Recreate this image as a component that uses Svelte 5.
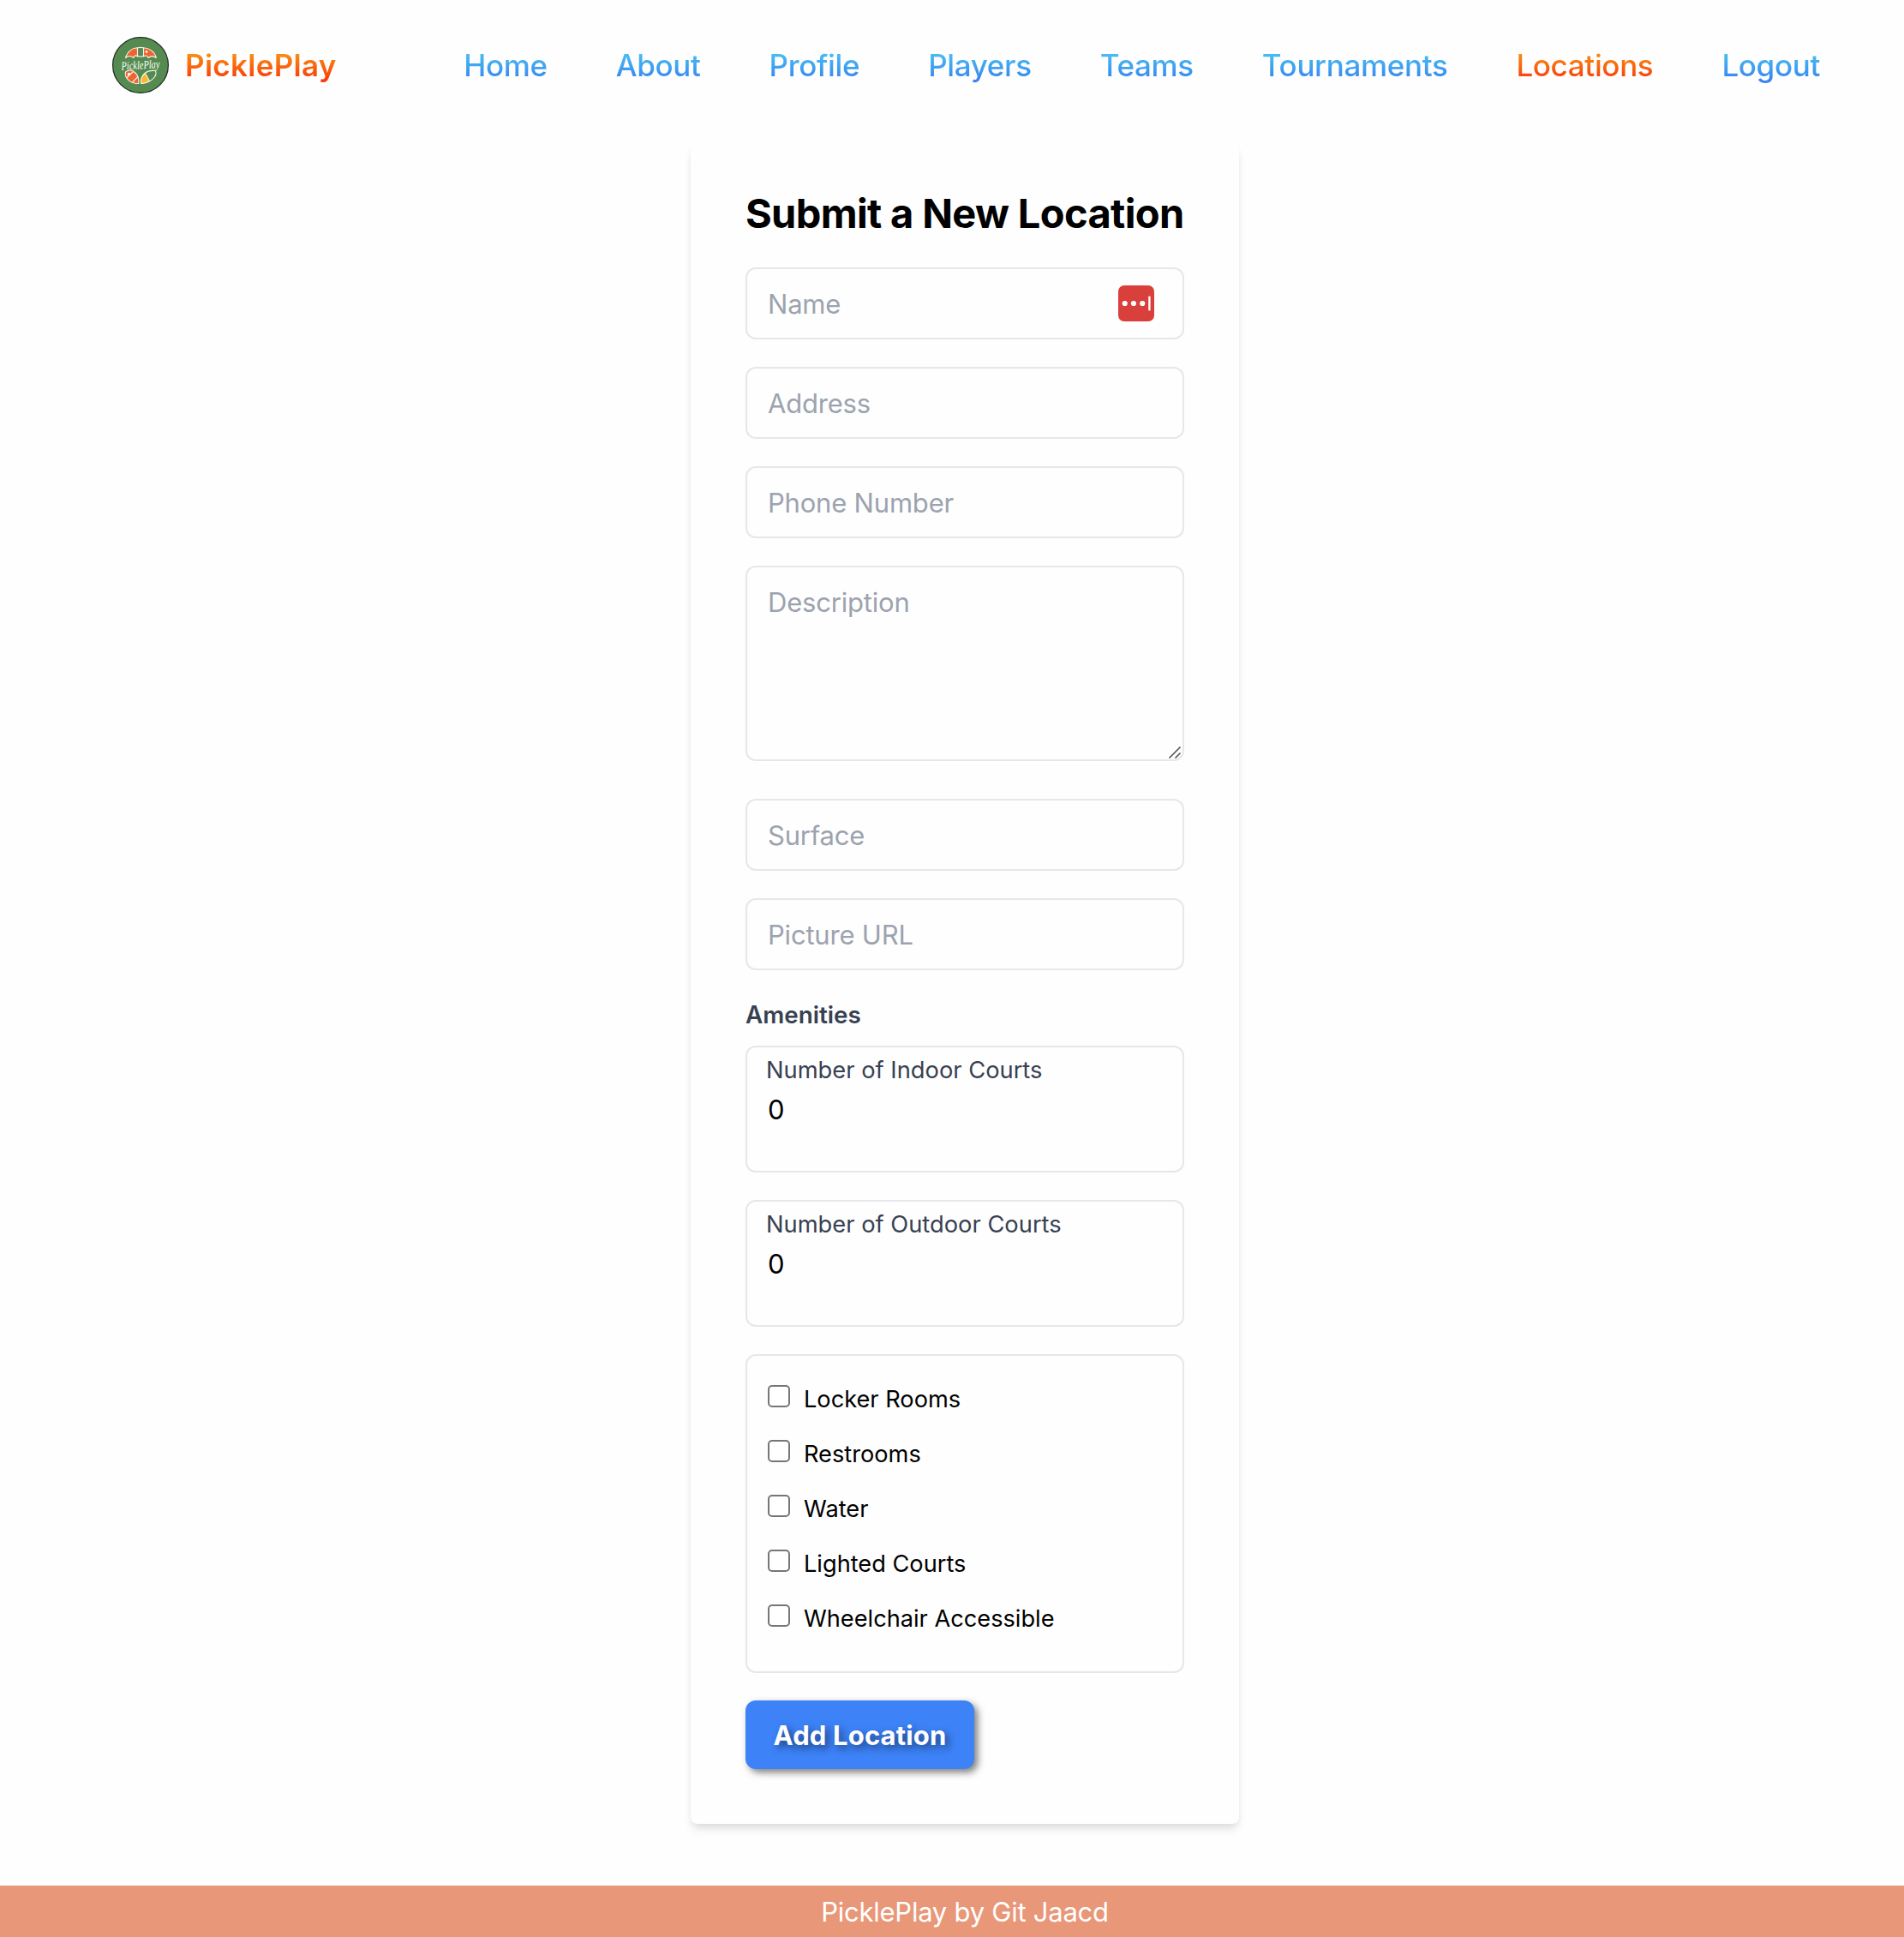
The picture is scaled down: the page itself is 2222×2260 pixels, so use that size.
<script>
  const links = [
    { label: 'Home' },
    { label: 'About' },
    { label: 'Profile' },
    { label: 'Players' },
    { label: 'Teams' },
    { label: 'Tournaments' },
    { label: 'Locations', active: true },
    { label: 'Logout' }
  ];
  const amenities = ['Locker Rooms', 'Restrooms', 'Water', 'Lighted Courts', 'Wheelchair Accessible'];
</script>

<div class="page">
  <header>
    <svg class="logo" viewBox="0 0 66 66" aria-hidden="true">
      <circle cx="33" cy="33" r="32.400" fill="#558b50" stroke="#1f2a20" stroke-width="1.200" />
      <g stroke="#f4f4ec" stroke-width="1.100" stroke-linejoin="round">
        <path d="M15.500 24.500C18 16.500 24 13 29.500 12.800V23C27.500 21 25.500 22 25 24.500C22 22 18.500 22 15.500 24.500Z" fill="#f1622f" />
        <path d="M36.500 12.800C43 13 49.500 17 51.300 24.500C48 22 45 22 42 24.500C41 22 39 21 36.500 23Z" fill="#f1622f" />
        <path d="M29.500 12.800Q33 12 36.500 12.800V22Q33 24.500 29.500 22Z" fill="#558b50" />
        <path d="M17 40C24 36.500 32 44 30.700 54.500C22 55 13.500 48 15.500 41Z" fill="#f1622f" />
        <path d="M16.500 48L24.500 40.500M23 53.500L30 46.500" fill="none" />
        <path d="M33.500 54.500C33 46 38 38.500 50 39.500C53 43 49 53 33.500 54.500Z" fill="#558b50" />
        <path d="M33.500 54.500C33 49 35 45 38.500 42.500L43.500 51.500Q39 54.500 33.500 54.500Z" fill="#fbb827" />
      </g>
      <circle cx="40" cy="17.500" r="1.400" fill="#fff" />
      <circle cx="19.500" cy="43.500" r="1.700" fill="#fff" />
      <text x="10.500" y="37.500" class="script" textLength="45" lengthAdjust="spacingAndGlyphs" transform="rotate(-3 33 34)">PicklePlay</text>
    </svg>
    <span class="brand">PicklePlay</span>
    <nav>
      {#each links as link}
        <a class:active={link.active}>{link.label}</a>
      {/each}
    </nav>
  </header>

  <main>
    <form>
      <h1>Submit a New Location</h1>
      <div class="field">
        <span>Name</span>
        <svg class="vault" viewBox="0 0 42 42" aria-hidden="true">
          <rect width="42" height="42" rx="7" fill="#d93f3b" />
          <g fill="#fff">
            <circle cx="7.700" cy="21" r="3.100" />
            <circle cx="17.900" cy="21" r="3.100" />
            <circle cx="28.200" cy="21" r="3.100" />
            <rect x="35.200" y="12.500" width="2.400" height="17" rx="1" />
          </g>
        </svg>
      </div>
      <div class="field"><span>Address</span></div>
      <div class="field"><span>Phone Number</span></div>
      <div class="field area">
        <span>Description</span>
        <svg class="grip" viewBox="0 0 14 14" aria-hidden="true">
          <path d="M.5 13.500L13.500 .5M7.500 13.500L13.500 7.500" stroke="#4a4a4a" stroke-width="1.500" fill="none" />
        </svg>
      </div>
      <div class="field"><span>Surface</span></div>
      <div class="field"><span>Picture URL</span></div>
      <h2>Amenities</h2>
      <div class="count"><span>Number of Indoor Courts</span><b>0</b></div>
      <div class="count"><span>Number of Outdoor Courts</span><b>0</b></div>
      <div class="checks">
        {#each amenities as item}
          <div class="check"><i></i><span>{item}</span></div>
        {/each}
      </div>
      <button type="button">Add Location</button>
    </form>
  </main>

  <footer>PicklePlay by Git Jaacd</footer>
</div>

<style>
  :global(body) { background: #fefefe; }
  * { box-sizing: border-box; }
  .page {
    width: 2222px;
    height: 2260px;
    display: flex;
    flex-direction: column;
    font-family: Inter, 'Liberation Sans', sans-serif;
    color: #000;
  }
  header {
    height: 168px;
    padding: 0 98px 16px 131px;
    display: flex;
    align-items: center;
    flex: none;
  }
  .logo { width: 66px; height: 66px; overflow: visible; }
  .script { font: italic 14px 'Liberation Serif', serif; fill: #fff; }
  .brand, a {
    font-size: 35px;
    line-height: 56px;
    background: linear-gradient(#50d8f2, #3172f0);
    background-clip: text;
    -webkit-background-clip: text;
    color: transparent;
    white-space: nowrap;
  }
  a { font-weight: 500; letter-spacing: -0.35px; }
  .brand { font-weight: 600; margin-left: 19px; letter-spacing: 0.3px; }
  .brand, .active { background-image: linear-gradient(#f6b818, #fc1b06); }
  nav { margin-left: auto; display: flex; gap: 80px; }
  main { flex: 1; display: flex; justify-content: center; align-items: flex-start; padding-left: 30px; }
  form {
    width: 640px;
    height: 1960px;
    padding: 48px 64px 64px;
    border-radius: 8px;
    box-shadow: 0 8px 12px -2px rgba(0, 0, 0, 0.1), 0 4px 8px -2px rgba(0, 0, 0, 0.06);
    background: #fefefe;
  }
  h1 {
    margin: 0 0 32px;
    font-size: 47px;
    line-height: 66px;
    height: 64px;
    font-weight: 700;
    letter-spacing: -0.65px;
    white-space: nowrap;
  }
  .field {
    position: relative;
    height: 84px;
    margin-bottom: 32px;
    border: 2px solid #e5e7eb;
    border-radius: 12px;
    padding: 17px 24px 15px;
    font-size: 31px;
    line-height: 48px;
    letter-spacing: -0.2px;
    color: #9ca3af;
  }
  .area { height: 228px; margin-bottom: 44px; }
  .vault { position: absolute; width: 42px; height: 42px; right: 33px; top: 19px; }
  .grip { position: absolute; width: 14px; height: 14px; right: 2px; bottom: 1px; }
  h2 {
    margin: 0 0 16px;
    font-size: 27.8px;
    line-height: 40px;
    font-weight: 600;
    color: #374151;
  }
  .count {
    height: 148px;
    margin-bottom: 32px;
    border: 2px solid #e5e7eb;
    border-radius: 12px;
    padding: 7px 22px;
    display: flex;
    flex-direction: column;
  }
  .count span { font-size: 27.3px; line-height: 40px; color: #374151; }
  b { font-size: 31px; line-height: 48px; font-weight: 400; padding: 2px 0 0 2px; }
  .checks {
    height: 372px;
    margin-bottom: 32px;
    border: 2px solid #e5e7eb;
    border-radius: 12px;
    padding: 24px;
    display: flex;
    flex-direction: column;
    gap: 24px;
  }
  .check { height: 40px; display: flex; align-items: flex-start; gap: 16px; font-size: 27.2px; line-height: 54px; }
  .check i { width: 26px; height: 26px; margin-top: 10px; border: 2px solid #767676; border-radius: 5px; background: #fff; }
  button {
    width: 267px;
    height: 80px;
    padding: 0;
    border: 0;
    border-radius: 12px;
    background: #3d82f7;
    color: #fff;
    font: 700 31px/82px Inter, sans-serif;
    letter-spacing: 0.15px;
    text-shadow: 4px 4px 8px rgba(0, 0, 0, 0.5);
    box-shadow: 4px 4px 8px rgba(0, 0, 0, 0.5);
  }
  footer {
    height: 60px;
    flex: none;
    background: #e89778;
    color: #fff;
    font-size: 31px;
    line-height: 62px;
    letter-spacing: -0.25px;
    text-align: center;
    padding-left: 30px;
  }
</style>
